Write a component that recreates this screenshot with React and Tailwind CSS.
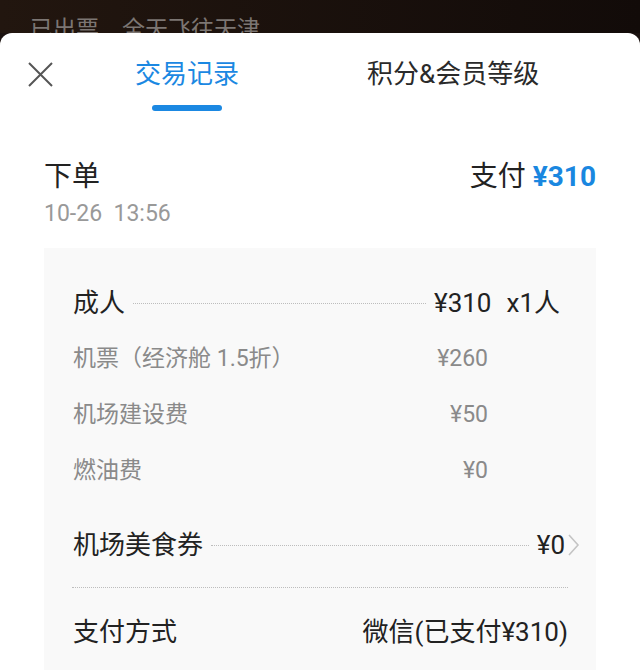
const font = { fontFamily: 'Roboto, "Noto Sans CJK SC", sans-serif' }

function Chevron() {
  return (
    <svg width="13" height="24" viewBox="0 0 13 24" className="ml-[2px]">
      <polyline points="2,2 11,12 2,22" fill="none" stroke="#c4c4c4" strokeWidth="1.6" />
    </svg>
  )
}

export default function App() {
  return (
    <div className="h-[670px] w-[640px] overflow-hidden bg-[#1a110f]" style={font}>
      <div className="h-[33px] overflow-hidden bg-gradient-to-r from-[#22160f] to-[#120b09]">
        <div className="pl-[30px] pt-[15px] text-[23px] leading-[30px] text-[#7c7673]">已出票　全天飞往天津</div>
      </div>

      <div className="h-[637px] rounded-t-[12px] bg-white">
        <div className="flex items-start pt-[24px]">
          <svg width="25" height="25" viewBox="0 0 25 25" className="ml-[28px] mt-[5px]">
            <path d="M1 1 L24 24 M24 1 L1 24" stroke="#555" strokeWidth="2" />
          </svg>
          <div className="ml-[82px] flex flex-col items-center">
            <span className="text-[26px] leading-[34px] text-[#1b88e2]">交易记录</span>
            <span className="mt-[14px] h-[6px] w-[70px] rounded-full bg-[#1b88e2]" />
          </div>
          <span className="ml-[128px] text-[26px] leading-[34px] text-[#2a2a2a]">积分&会员等级</span>
        </div>

        <div className="px-[44px] pt-[49px]">
          <div className="flex items-center justify-between text-[28px] leading-[34px] text-[#222]">
            <span>下单</span>
            <span>
              支付 <span className="font-bold text-[#1a87e0]">¥310</span>
            </span>
          </div>
          <div className="mt-[6px] text-[23px] leading-[28px] text-[#999]">10-26&nbsp;&nbsp;13:56</div>

          <div className="mt-[20px] h-[500px] bg-[#f9f9f9] pt-[27px]">
            <div className="flex h-[56px] items-center pl-[29px] pr-[36px] text-[26px] text-[#222]">
              <span>成人</span>
              <span className="mx-[8px] flex-1 border-t border-dotted border-[#bdbdbd]" />
              <span>¥310</span>
              <span className="ml-[15px]">x1人</span>
            </div>
            {[
              ['机票（经济舱 1.5折）', '¥260'],
              ['机场建设费', '¥50'],
              ['燃油费', '¥0'],
            ].map(([label, value]) => (
              <div key={label} className="flex h-[56px] items-center justify-between pl-[29px] pr-[108px] text-[23px] text-[#8a8a8a]">
                <span>{label}</span>
                <span>{value}</span>
              </div>
            ))}
            <div className="mt-[18px] flex h-[56px] items-center pl-[29px] pr-[16px] text-[26px] text-[#222]">
              <span>机场美食券</span>
              <span className="mx-[8px] flex-1 border-t border-dotted border-[#bdbdbd]" />
              <span>¥0</span>
              <Chevron />
            </div>
            <div className="mx-[28px] mt-[14px] border-t border-dotted border-[#bdbdbd]" />
            <div className="mt-[16px] flex h-[56px] items-center justify-between pl-[29px] pr-[28px] text-[26px] text-[#222]">
              <span>支付方式</span>
              <span>微信(已支付¥310)</span>
            </div>
          </div>
        </div>
      </div>
    </div>
  )
}
